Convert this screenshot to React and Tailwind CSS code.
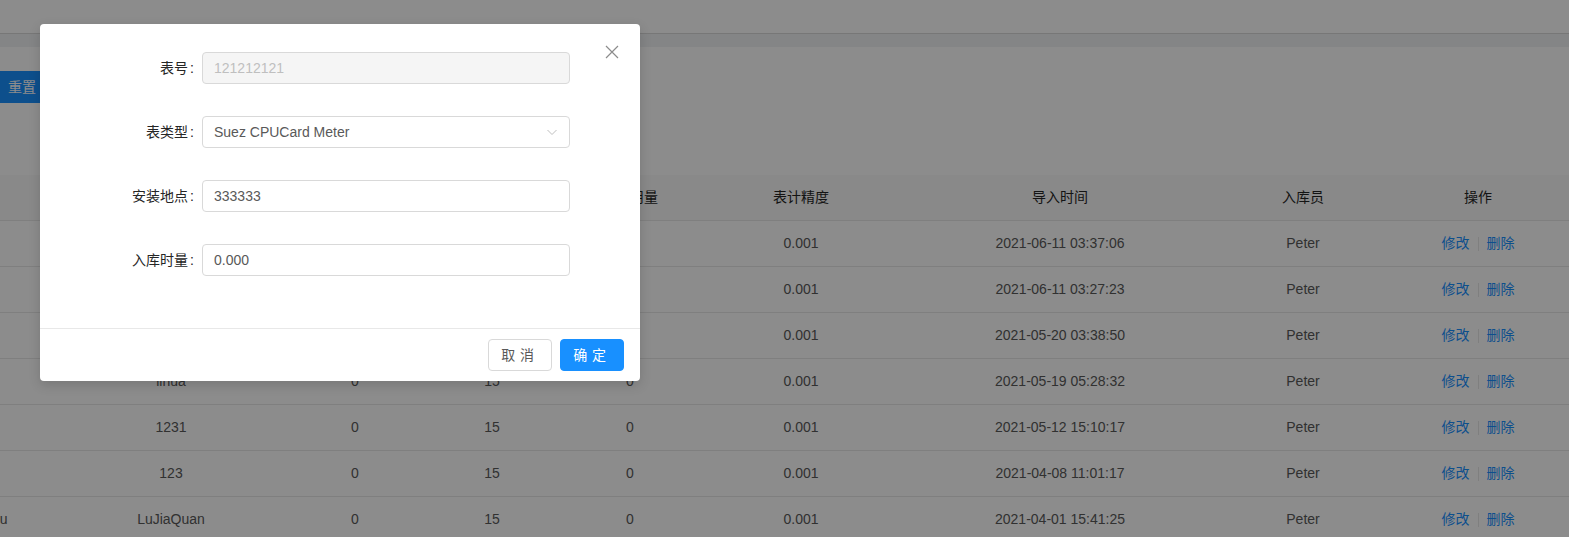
import React from "react";

const font = { fontFamily: '"Liberation Sans", "Noto Sans CJK SC", sans-serif' };

const rows = [
  ["WuHan", "333333", "0", "15", "0", "0.001", "2021-06-11 03:37:06"],
  ["WuHan", "121212121", "0", "15", "0", "0.001", "2021-06-11 03:27:23"],
  ["WuHan", "test", "0", "15", "0", "0.001", "2021-05-20 03:38:50"],
  ["WuHan", "linua", "0", "15", "0", "0.001", "2021-05-19 05:28:32"],
  ["WuHan", "1231", "0", "15", "0", "0.001", "2021-05-12 15:10:17"],
  ["WuHan", "123", "0", "15", "0", "0.001", "2021-04-08 11:01:17"],
  ["ZhongShanLu", "LuJiaQuan", "0", "15", "0", "0.001", "2021-04-01 15:41:25"],
];

function FormItem({ label, children }) {
  return (
    <div className="mb-[24px] flex h-[40px] items-center">
      <div className="w-[138px] shrink-0 text-right text-[14px] text-[#262626]">
        {label}
        <span className="ml-[2px] mr-[8px]">:</span>
      </div>
      <div className="w-[368px]">{children}</div>
    </div>
  );
}

export default function App() {
  return (
    <div className="relative h-[537px] w-full overflow-hidden bg-white text-[14px]" style={font}>
      {/* page header */}
      <div className="h-[34px] border-b border-[#d9d9d9] bg-white" />
      <div className="h-[13px] bg-[#f0f2f5]" />
      {/* filter area */}
      <div className="h-[128px] bg-white pt-[24px]">
        <button className="-ml-[7px] h-[32px] rounded-[4px] bg-[#1890ff] px-[15px] text-[14px] text-white">
          重置
        </button>
      </div>
      {/* table */}
      <table className="-ml-[130px] w-[1699px] table-fixed border-collapse text-center">
        <colgroup>
          <col className="w-[187px]" />
          <col className="w-[228px]" />
          <col className="w-[140px]" />
          <col className="w-[134px]" />
          <col className="w-[142px]" />
          <col className="w-[200px]" />
          <col className="w-[318px]" />
          <col className="w-[168px]" />
          <col className="w-[182px]" />
        </colgroup>
        <thead>
          <tr className="h-[45px] border-b border-[#e8e8e8] bg-[#fafafa] text-[#262626]">
            <th className="font-normal">地点</th>
            <th className="font-normal">表号</th>
            <th className="font-normal">初始量</th>
            <th className="font-normal">表类型</th>
            <th className="font-normal">累计用量</th>
            <th className="font-normal">表计精度</th>
            <th className="font-normal">导入时间</th>
            <th className="font-normal">入库员</th>
            <th className="font-normal">操作</th>
          </tr>
        </thead>
        <tbody className="text-[#595959]">
          {rows.map((r, i) => (
            <tr key={i} className="h-[46px] border-b border-[#e8e8e8]">
              {r.map((c, j) => (
                <td key={j} className="whitespace-nowrap">
                  {c}
                </td>
              ))}
              <td>Peter</td>
              <td>
                <span className="text-[#1890ff]">修改</span>
                <span className="mx-[8px] inline-block h-[14px] w-px bg-[#e8e8e8] align-middle" />
                <span className="text-[#1890ff]">删除</span>
              </td>
            </tr>
          ))}
        </tbody>
      </table>

      {/* mask */}
      <div className="absolute inset-0 bg-black/45" />

      {/* modal */}
      <div className="absolute left-[40px] top-[24px] w-[600px] rounded-[4px] bg-white shadow-[0_4px_12px_rgba(0,0,0,0.15)]">
        <button className="absolute right-0 top-0 flex h-[56px] w-[56px] items-center justify-center text-[#8c8c8c]">
          <svg width="14" height="14" viewBox="0 0 14 14" fill="none" stroke="currentColor" strokeWidth="1.2">
            <path d="M1 1 L13 13 M13 1 L1 13" />
          </svg>
        </button>
        <div className="p-[24px]">
          <FormItem label="表号">
            <div className="flex h-[32px] items-center rounded-[4px] border border-[#d9d9d9] bg-[#f5f5f5] px-[11px] text-[#bfbfbf]">
              121212121
            </div>
          </FormItem>
          <FormItem label="表类型">
            <div className="flex h-[32px] items-center justify-between rounded-[4px] border border-[#d9d9d9] bg-white px-[11px] text-[#595959]">
              <span>Suez CPUCard Meter</span>
              <svg width="12" height="12" viewBox="0 0 12 12" fill="none" stroke="#bfbfbf" strokeWidth="1">
                <path d="M1.5 4 L6 8.5 L10.5 4" />
              </svg>
            </div>
          </FormItem>
          <FormItem label="安装地点">
            <div className="flex h-[32px] items-center rounded-[4px] border border-[#d9d9d9] bg-white px-[11px] text-[#595959]">
              333333
            </div>
          </FormItem>
          <FormItem label="入库时量">
            <div className="flex h-[32px] items-center rounded-[4px] border border-[#d9d9d9] bg-white px-[11px] text-[#595959]">
              0.000
            </div>
          </FormItem>
        </div>
        <div className="flex justify-end gap-[8px] border-t border-[#e8e8e8] px-[16px] py-[10px]">
          <button className="h-[32px] w-[64px] rounded-[4px] border border-[#d9d9d9] bg-white text-[14px] tracking-[0.34em] text-[#595959]">
            取消
          </button>
          <button className="h-[32px] w-[64px] rounded-[4px] border border-[#1890ff] bg-[#1890ff] text-[14px] tracking-[0.34em] text-white">
            确定
          </button>
        </div>
      </div>
    </div>
  );
}
